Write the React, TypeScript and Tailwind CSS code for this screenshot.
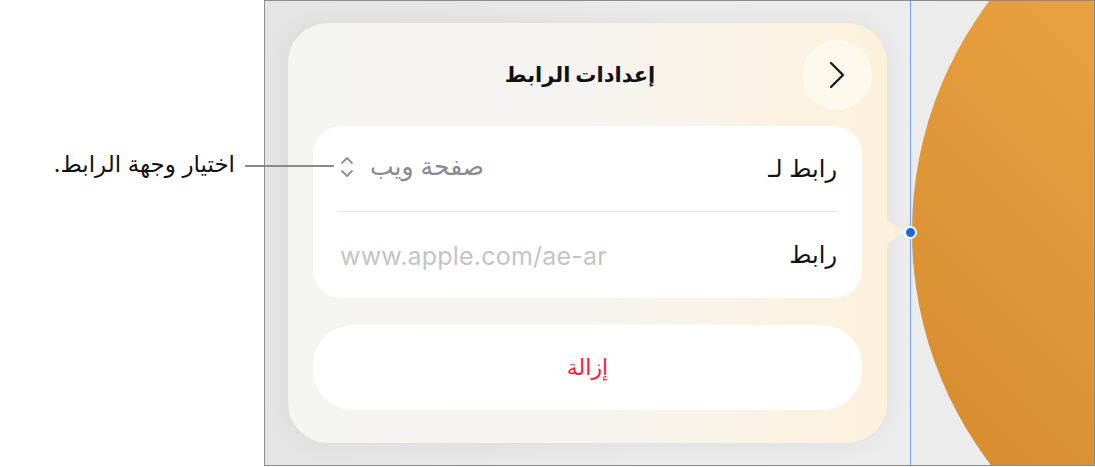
const arabic = "font-['Inter','DejaVu_Sans',sans-serif]";

function ChevronRight() {
  return (
    <svg width="18" height="28" viewBox="0 0 18 28" fill="none" stroke="#1c1c1e" strokeWidth="2.4" strokeLinecap="round" strokeLinejoin="round">
      <polyline points="3,2 15,14 3,26" />
    </svg>
  );
}

function UpDown() {
  return (
    <svg width="14" height="24" viewBox="0 0 14 24" fill="none" stroke="#8e8e93" strokeWidth="1.8" strokeLinecap="round" strokeLinejoin="round">
      <polyline points="2,8 7,3 12,8" />
      <polyline points="2,16 7,21 12,16" />
    </svg>
  );
}

function Row({ label, children, divider }: { label: string; children: React.ReactNode; divider?: boolean }) {
  return (
    <div className={`mx-[25px] flex h-[86px] items-center justify-between ${divider ? "border-b border-[#e3e3e3]" : ""}`}>
      <span className="text-[24px] text-[#111]">{label}</span>
      {children}
    </div>
  );
}

export default function App() {
  return (
    <div className={`relative flex h-[467px] w-[1095px] bg-white ${arabic}`}>
      {/* callout on the left */}
      <div className="flex w-[264px] shrink-0 justify-end pr-[29px] pt-[148px]">
        <span dir="rtl" className="text-[23px] leading-[32px] text-[#111]">اختيار وجهة الرابط.</span>
      </div>
      <div className="absolute left-[245px] top-[165px] z-10 h-[1.5px] w-[89px] bg-[#8a8a8a]" />

      {/* canvas frame */}
      <div className="relative h-[466px] w-[831px] shrink-0 overflow-hidden border border-[#8c8c8c] bg-gradient-to-r from-[#e4e4e4] via-[#ebebeb] to-[#ececec] pl-[23px] pt-[22px]">
        {/* shape on the canvas */}
        <div className="absolute left-[647px] top-[-153px] h-[768px] w-[768px] rounded-full bg-gradient-to-bl from-[#f7b050] via-[#e8a040] to-[#d0862a]" />
        <div className="absolute left-[645px] top-0 h-full w-px bg-[#6f9ef2]" />
        <div className="absolute left-[639px] top-[225px] z-20 h-[13px] w-[13px] rounded-full border-2 border-white bg-[#1b68d8]" />

        {/* link settings popover */}
        <div className="relative h-[420px] w-[599px] rounded-[40px] bg-gradient-to-r from-[#f4f4f3] via-[#f6f4f0] to-[#fdf1dc] shadow-[0_0_24px_rgba(0,0,0,0.06)]">
          <svg className="absolute right-[-19px] top-[186px]" width="22" height="46" viewBox="0 0 22 46">
            <path d="M0 0 C 2 12, 8 16, 20 23 C 8 30, 2 34, 0 46 Z" fill="#fdf1dc" />
          </svg>

          <div className="flex h-[70px] items-center pr-[15px] pt-[17px] box-content">
            <div className="w-[70px]" />
            <div dir="rtl" className="flex-1 text-center text-[21px] font-bold text-[#111]">إعدادات الرابط</div>
            <button className="flex h-[70px] w-[70px] items-center justify-center rounded-full bg-[#fdf9ec]">
              <ChevronRight />
            </button>
          </div>

          <div dir="rtl" className="mx-[25px] mt-[16px] rounded-[28px] bg-white">
            <Row label="رابط لـ" divider>
              <span className="ml-[2px] flex items-center gap-[16px] pb-[4px] text-[25px] text-[#8a8a8e]">
                صفحة ويب
                <UpDown />
              </span>
            </Row>
            <Row label="رابط">
              <span dir="ltr" className="ml-[2px] pt-[4px] text-[25px] tracking-[0.2px] text-[#c4c4c6]">www.apple.com/ae-ar</span>
            </Row>
          </div>

          <button dir="rtl" className="mx-[25px] mt-[27px] flex h-[85px] w-[549px] items-center justify-center rounded-[40px] bg-white text-[22px] text-[#ff1a3c]">
            إزالة
          </button>
        </div>
      </div>
    </div>
  );
}
